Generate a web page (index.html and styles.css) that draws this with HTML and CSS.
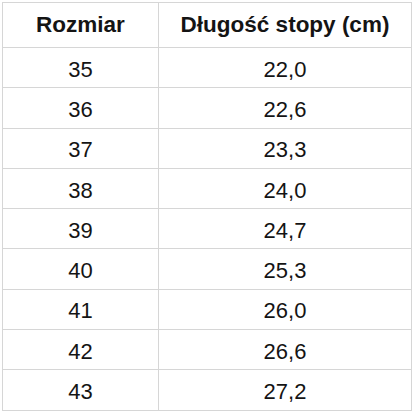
FILE: index.html
```html
<!DOCTYPE html>
<html lang="pl">
<head>
<meta charset="utf-8">
<title>Tabela rozmiarów</title>
<link rel="stylesheet" href="styles.css">
</head>
<body>
<table class="size-table">
  <thead>
    <tr class="head-row"><th class="col-size">Rozmiar</th><th class="col-len">Długość stopy (cm)</th></tr>
  </thead>
  <tbody>
    <tr><td>35</td><td>22,0</td></tr>
    <tr><td>36</td><td>22,6</td></tr>
    <tr><td>37</td><td>23,3</td></tr>
    <tr><td>38</td><td>24,0</td></tr>
    <tr><td>39</td><td>24,7</td></tr>
    <tr><td>40</td><td>25,3</td></tr>
    <tr><td>41</td><td>26,0</td></tr>
    <tr><td>42</td><td>26,6</td></tr>
    <tr><td>43</td><td>27,2</td></tr>
  </tbody>
</table>
</body>
</html>
```
FILE: styles.css
```css
html, body {
  margin: 0;
  background: #ffffff;
}
body {
  padding: 2px;
  font-family: "Liberation Sans", Arial, sans-serif;
  color: #141414;
}
.size-table {
  border-collapse: collapse;
  width: 410px;
  table-layout: fixed;
}
.size-table th,
.size-table td {
  box-sizing: border-box;
  border: 1px solid #d6d6d6;
  text-align: center;
  padding: 0;
  line-height: 1;
}
.col-size { width: 156px; }
.size-table th {
  font-weight: bold;
  font-size: 22.5px;
  height: 45px;
}
.size-table td {
  font-size: 22px;
  height: 40.3px;
  padding-top: 4px;
}
```
